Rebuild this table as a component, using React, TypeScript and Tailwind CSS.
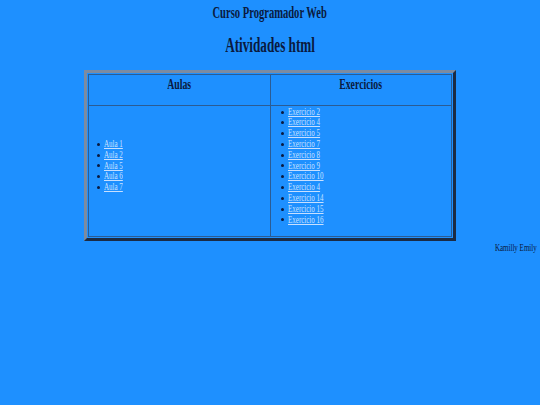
import React from 'react';

const aulas = ['Aula 1', 'Aula 2', 'Aula 5', 'Aula 6', 'Aula 7'];
const exercicios = [
  'Exercicio 2',
  'Exercicio 4',
  'Exercicio 5',
  'Exercicio 7',
  'Exercicio 8',
  'Exercicio 9',
  'Exercicio 10',
  'Exercicio 4',
  'Exercicio 14',
  'Exercicio 15',
  'Exercicio 16',
];

function LinkList({ items }: { items: string[] }) {
  return (
    <ul className="flex flex-col">
      {items.map((item, i) => (
        <li key={i} className="flex items-center h-[10.8px] text-[10px] leading-[10.8px]">
          <span className="w-[3px] h-[3px] rounded-full bg-[#0a1a40] mr-[4px]" />
          <a href="#" className="inline-block origin-left scale-x-[0.7] text-[#c8e0ff] underline whitespace-nowrap">
            {item}
          </a>
        </li>
      ))}
    </ul>
  );
}

export default function App() {
  return (
    <div className="w-full h-[405px] bg-[#1e90ff] text-[#0a1a40] font-['Liberation_Serif',serif]">
      <div className="pt-[4px] text-center text-[16px] leading-[18px] font-bold">
        <span className="inline-block scale-x-[0.66]">Curso Programador Web</span>
      </div>
      <h2 className="mt-[11px] text-center text-[20px] leading-[24px] font-bold">
        <span className="inline-block scale-x-[0.66]">Atividades html</span>
      </h2>

      {/* tabela com borda outset */}
      <div className="mt-[13px] mx-auto w-[372px] border-[3px] border-t-[#7d8ba0] border-l-[#7d8ba0] border-r-[#1b2b44] border-b-[#1b2b44] bg-[#1e90ff] p-[1px]">
        <div className="grid grid-cols-2 gap-px bg-[#2b5c94] p-px">
          <div className="h-[30px] bg-[#1e90ff] pt-[2px] text-center text-[14px] leading-[16px] font-bold">
            <span className="inline-block scale-x-[0.7]">Aulas</span>
          </div>
          <div className="h-[30px] bg-[#1e90ff] pt-[2px] text-center text-[14px] leading-[16px] font-bold">
            <span className="inline-block scale-x-[0.7]">Exercicios</span>
          </div>
          <div className="h-[130px] bg-[#1e90ff] flex items-center pl-[8px] pb-[10px]">
            <LinkList items={aulas} />
          </div>
          <div className="h-[130px] bg-[#1e90ff] flex items-center pl-[10px] pb-[10px]">
            <LinkList items={exercicios} />
          </div>
        </div>
      </div>

      <div className="mt-[1px] pr-[3px] text-right text-[10px] leading-[12px]">
        <span className="inline-block origin-right scale-x-[0.7]">Kamilly Emily</span>
      </div>
    </div>
  );
}
